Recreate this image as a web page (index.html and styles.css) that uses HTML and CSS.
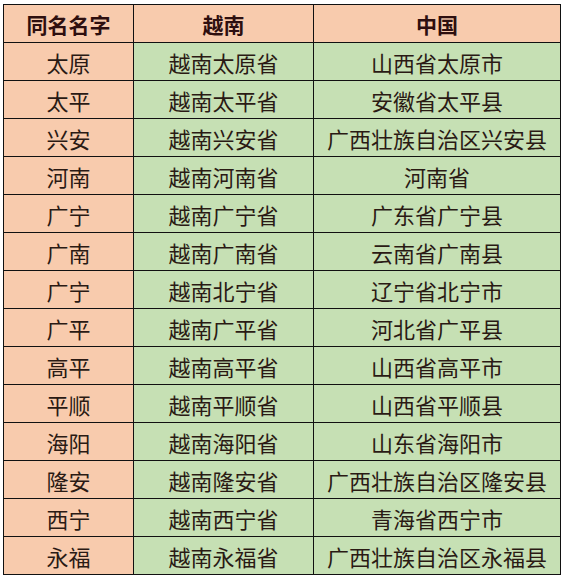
FILE: index.html
```html
<!DOCTYPE html>
<html lang="zh-CN">
<head>
<meta charset="utf-8">
<title>同名名字</title>
<link rel="stylesheet" href="styles.css">
</head>
<body>
<table class="names">
  <colgroup>
    <col class="c1"><col class="c2"><col class="c3">
  </colgroup>
  <thead>
    <tr><th>同名名字</th><th>越南</th><th>中国</th></tr>
  </thead>
  <tbody>
    <tr><td class="name">太原</td><td>越南太原省</td><td>山西省太原市</td></tr>
    <tr><td class="name">太平</td><td>越南太平省</td><td>安徽省太平县</td></tr>
    <tr><td class="name">兴安</td><td>越南兴安省</td><td>广西壮族自治区兴安县</td></tr>
    <tr><td class="name">河南</td><td>越南河南省</td><td>河南省</td></tr>
    <tr><td class="name">广宁</td><td>越南广宁省</td><td>广东省广宁县</td></tr>
    <tr><td class="name">广南</td><td>越南广南省</td><td>云南省广南县</td></tr>
    <tr><td class="name">广宁</td><td>越南北宁省</td><td>辽宁省北宁市</td></tr>
    <tr><td class="name">广平</td><td>越南广平省</td><td>河北省广平县</td></tr>
    <tr><td class="name">高平</td><td>越南高平省</td><td>山西省高平市</td></tr>
    <tr><td class="name">平顺</td><td>越南平顺省</td><td>山西省平顺县</td></tr>
    <tr><td class="name">海阳</td><td>越南海阳省</td><td>山东省海阳市</td></tr>
    <tr><td class="name">隆安</td><td>越南隆安省</td><td>广西壮族自治区隆安县</td></tr>
    <tr><td class="name">西宁</td><td>越南西宁省</td><td>青海省西宁市</td></tr>
    <tr><td class="name">永福</td><td>越南永福省</td><td>广西壮族自治区永福县</td></tr>
  </tbody>
</table>
</body>
</html>
```
FILE: styles.css
```css
html, body {
  margin: 0;
  padding: 0;
  background: #ffffff;
}
body {
  padding: 4px 0 0 3px;
  font-family: "Noto Sans CJK SC", "Noto Sans", sans-serif;
}
.names {
  border-collapse: collapse;
  table-layout: fixed;
  width: 557px;
}
.c1 { width: 130px; }
.c2 { width: 180px; }
.c3 { width: 247px; }
.names tr {
  height: 38px;
}
.names th,
.names td {
  border: 1.5px solid #111111;
  padding: 0;
  text-align: center;
  vertical-align: middle;
  font-size: 22px;
  line-height: 30px;
  color: #2a1a14;
  background: #c6e0b4;
  white-space: nowrap;
}
.names th {
  background: #f8cbad;
  font-weight: bold;
  font-size: 21px;
  color: #2e0f0f;
}
.names td.name {
  background: #f8cbad;
}
```
